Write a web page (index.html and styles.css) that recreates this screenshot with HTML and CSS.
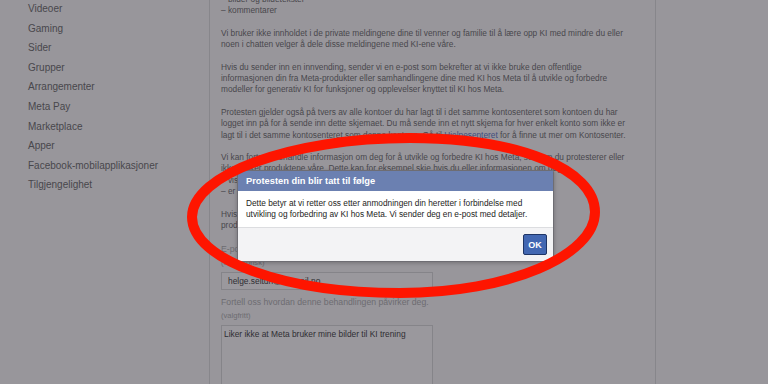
FILE: index.html
```html
<!DOCTYPE html>
<html lang="no">
<head>
  <meta charset="UTF-8">
  <meta name="viewport" content="width=device-width, initial-scale=1.0">
  <title>Protest mot behandling av informasjon</title>
  <link rel="stylesheet" href="styles.css">
</head>
<body>
  <div class="page">
    <nav class="sidebar">
      <a href="#">Videoer</a>
      <a href="#">Gaming</a>
      <a href="#">Sider</a>
      <a href="#">Grupper</a>
      <a href="#">Arrangementer</a>
      <a href="#">Meta Pay</a>
      <a href="#">Marketplace</a>
      <a href="#">Apper</a>
      <a href="#">Facebook-mobilapplikasjoner</a>
      <a href="#">Tilgjengelighet</a>
    </nav>

    <main class="content">
      <p>– bilder og bildetekster<br>– kommentarer</p>
      <p>Vi bruker ikke innholdet i de private meldingene dine til venner og familie til å lære opp KI med mindre du eller<br>noen i chatten velger å dele disse meldingene med KI-ene våre.</p>
      <p>Hvis du sender inn en innvending, sender vi en e-post som bekrefter at vi ikke bruke den offentlige<br>informasjonen din fra Meta-produkter eller samhandlingene dine med KI hos Meta til å utvikle og forbedre<br>modeller for generativ KI for funksjoner og opplevelser knyttet til KI hos Meta.</p>
      <p>Protesten gjelder også på tvers av alle kontoer du har lagt til i det samme kontosenteret som kontoen du har<br>logget inn på for å sende inn dette skjemaet. Du må sende inn et nytt skjema for hver enkelt konto som ikke er<br>lagt til i det samme kontosenteret som denne kontoen. Gå til <a href="#">Hjelpesenteret</a> for å finne ut mer om Kontosenter.</p>
      <p>Vi kan fortsatt behandle informasjon om deg for å utvikle og forbedre KI hos Meta, selv om du protesterer eller<br>ikke bruker produktene våre. Dette kan for eksempel skje hvis du eller informasjonen om deg:<br>– vises på et bilde som deles på produktene våre av noen som bruker dem<br>– er nevnt i innlegg eller bildetekster som andre deler</p>
      <p>Hvis du vil, kan du også be om tilgang til informasjon som du har delt på Metas<br>produkter og som brukes til å utvikle KI.</p>

      <form class="objection">
        <label class="field-label" for="email">E-postadresse</label>
        <div class="field-note">(obligatorisk)</div>
        <input class="field-input" id="email" type="text" value="helge.seltun@hotmail.no">
        <label class="field-label lead" for="impact">Fortell oss hvordan denne behandlingen påvirker deg.</label>
        <div class="field-note">(valgfritt)</div>
        <textarea class="field-area" id="impact">Liker ikke at Meta bruker mine bilder til KI trening</textarea>
      </form>
    </main>

    <aside class="gutter"></aside>
  </div>

  <div class="dialog" role="dialog">
    <div class="dialog-title">Protesten din blir tatt til følge</div>
    <div class="dialog-body">Dette betyr at vi retter oss etter anmodningen din heretter i forbindelse med<br>utvikling og forbedring av KI hos Meta. Vi sender deg en e-post med detaljer.</div>
    <div class="dialog-footer">
      <button class="ok-btn">OK</button>
    </div>
  </div>

  <svg class="marker" viewBox="0 0 768 384" width="768" height="384">
    <path d="M192,217 C192,175 290,138 410,138 C520,138 595,170 595,212 C595,255 510,293 400,293 C285,293 192,260 192,217 Z"
          fill="none" stroke="#fe1500" stroke-width="10"/>
  </svg>
</body>
</html>
```

FILE: styles.css
```css
:root {
  --page-bg: #98969b;
  --text: #48474c;
  --muted: #6d6c71;
  --line: #87868b;
  --fb-blue: #6b80b1;
  --btn-bg: #4267b2;
}
html, body {
  margin: 0;
  height: 100%;
  overflow: hidden;
}
body {
  background: var(--page-bg);
  font-family: "Liberation Sans", Arial, sans-serif;
  color: var(--text);
}
.page {
  display: flex;
  height: 100%;
}
.sidebar {
  width: 181px;
  padding-left: 28px;
  margin-top: -1px;
  display: flex;
  flex-direction: column;
}
.sidebar a {
  font-size: 10px;
  line-height: 19.6px;
  color: #48474c;
  text-decoration: none;
}
.content {
  width: 434px;
  padding-left: 11px;
  border-left: 1px solid var(--line);
  border-right: 1px solid var(--line);
  margin-top: -6px;
  font-size: 8.3px;
  line-height: 11.3px;
  white-space: nowrap;
}
.content p {
  margin: 0 0 11.3px;
}
.content a {
  color: #404d7e;
  text-decoration: none;
}
.gutter {
  flex: 1;
}
.objection {
  display: flex;
  flex-direction: column;
  align-items: flex-start;
}
.field-label {
  font-size: 8.7px;
  line-height: 12px;
  color: var(--muted);
}
.field-label.lead {
  margin-top: 6px;
}
.field-note {
  font-size: 7.6px;
  line-height: 12px;
  margin-top: 2px;
  color: var(--muted);
}
.field-input,
.field-area {
  box-sizing: border-box;
  width: 212px;
  margin-top: 3px;
  border: 1px solid #858489;
  background: #9a989d;
  font-family: inherit;
  font-size: 8.4px;
  color: #2f2e33;
  outline: none;
  resize: none;
}
.field-input {
  height: 18px;
  padding: 0 6px;
}
.field-area {
  height: 80px;
  padding: 3px 2px;
}
.dialog {
  position: absolute;
  left: 237px;
  top: 170px;
  width: 315px;
  border: 1px solid #6e6d73;
  border-radius: 2px;
  background: #fff;
  box-shadow: 0 1px 4px rgba(0, 0, 0, 0.25);
}
.dialog-title {
  height: 20px;
  line-height: 20px;
  padding-left: 8px;
  background: var(--fb-blue);
  color: #fff;
  font-size: 9.3px;
  font-weight: bold;
}
.dialog-body {
  padding: 7px 8px;
  font-size: 8.3px;
  line-height: 11px;
  color: #1d1d22;
}
.dialog-footer {
  display: flex;
  justify-content: flex-end;
  padding: 6px 6px;
  background: #f3f3f5;
  border-top: 1px solid #dcdde0;
}
.ok-btn {
  width: 24px;
  height: 21px;
  padding: 0;
  border: 1px solid #1f3566;
  border-radius: 2px;
  background: var(--btn-bg);
  color: #fff;
  font-family: inherit;
  font-size: 9px;
  font-weight: bold;
}
.marker {
  position: absolute;
  left: 0;
  top: 0;
  pointer-events: none;
}
```
